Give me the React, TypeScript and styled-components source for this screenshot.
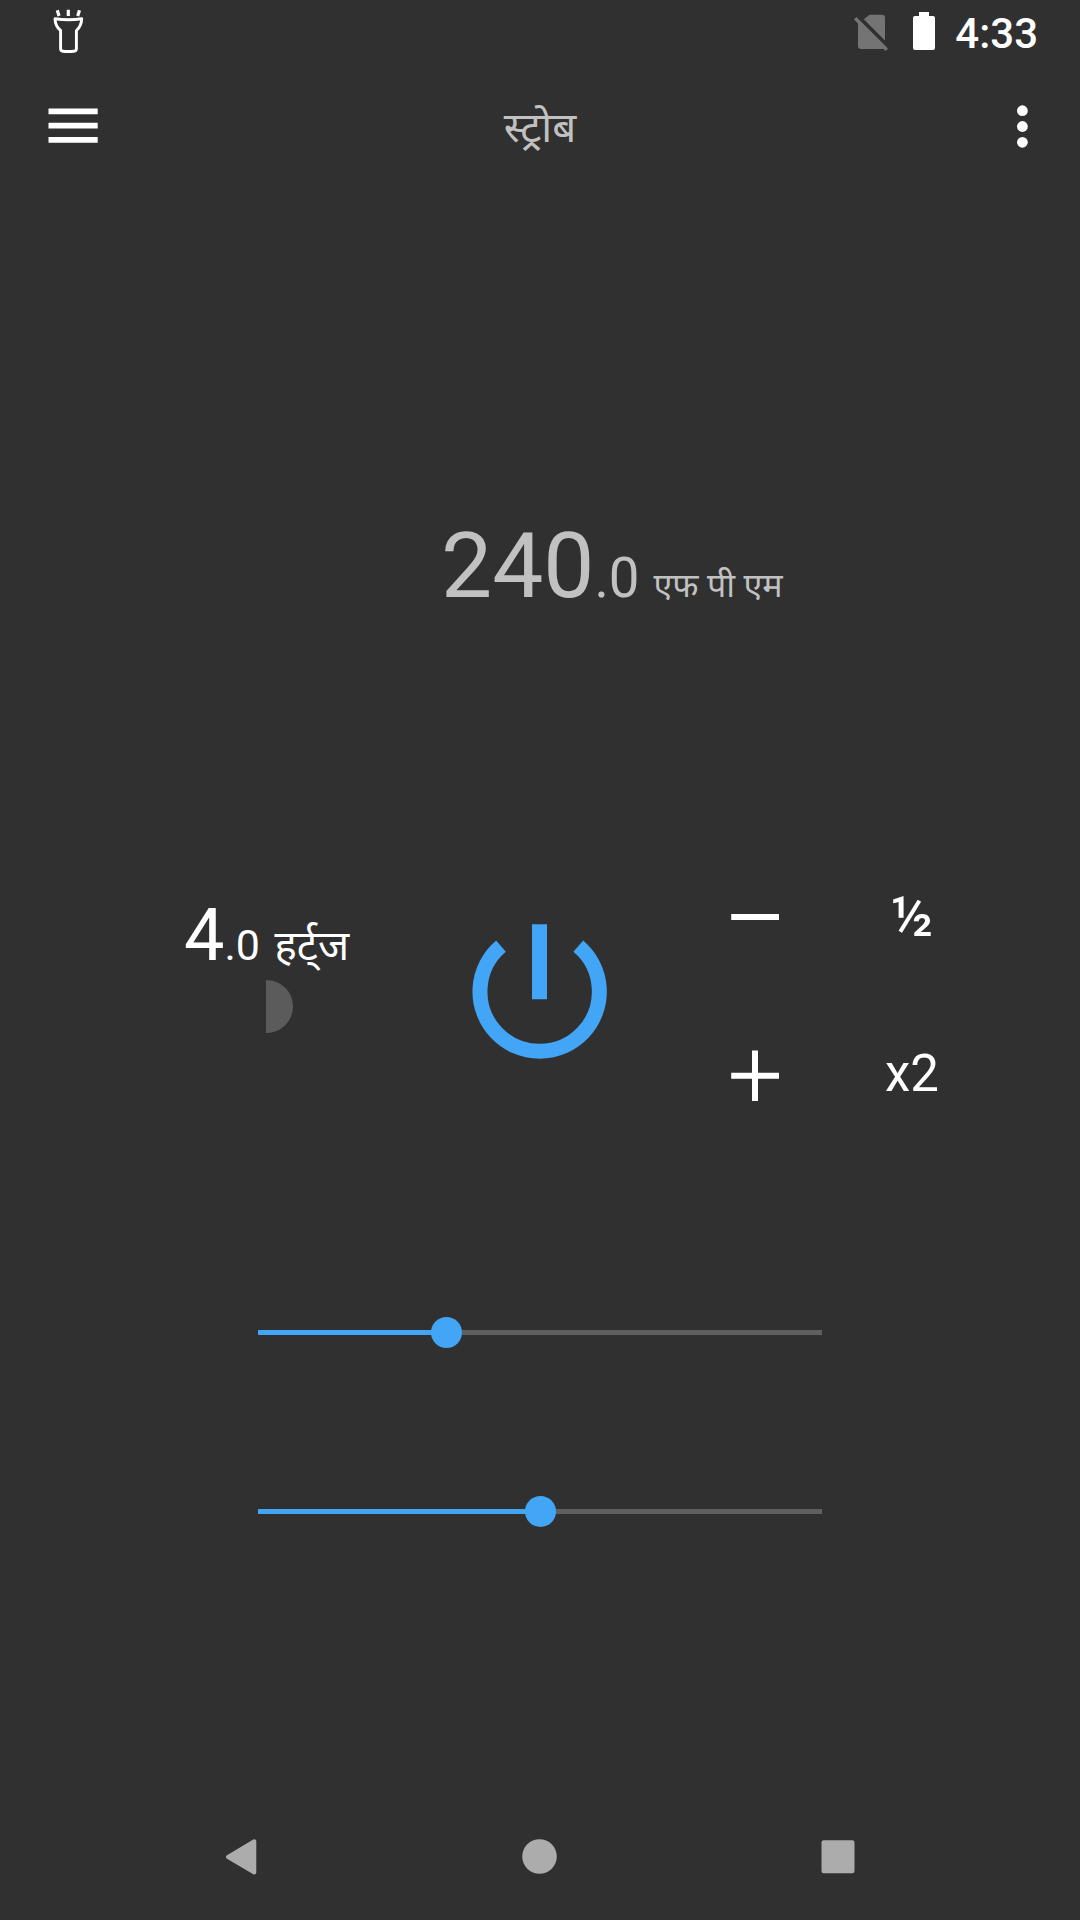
import React from "react";
import styled, { createGlobalStyle } from "styled-components";

const GlobalStyle = createGlobalStyle`
  * { box-sizing: border-box; }
  body { margin: 0; background: #303030; }
`;

const Screen = styled.div`
  width: 1080px;
  height: 1920px;
  display: flex;
  flex-direction: column;
  overflow: hidden;
  background: #303030;
  color: #fff;
  font-family: Roboto, "Noto Sans", "Noto Sans Devanagari", sans-serif;
`;

const StatusBar = styled.div`
  height: 63px;
  flex: none;
  display: flex;
  justify-content: space-between;
  padding: 0 42px 0 50px;
`;

const StatusGroup = styled.div`
  display: flex;
  height: 63px;
`;

const Clock = styled.span`
  margin-left: 19px;
  font-size: 42px;
  font-weight: 500;
  line-height: 68px;
`;

const AppBar = styled.header`
  height: 127px;
  flex: none;
  display: grid;
  grid-template-columns: 144px 1fr 144px;
  align-items: start;
`;

const IconButton = styled.button<{ $end?: boolean }>`
  height: 127px;
  border: 0;
  padding: 0;
  background: none;
  color: #fff;
  display: flex;
  justify-content: ${(p) => (p.$end ? "flex-end" : "flex-start")};
`;

const Title = styled.h1`
  margin: 0;
  padding-top: 36px;
  text-align: center;
  font-size: 42px;
  font-weight: 400;
  line-height: 57px;
  color: #c1c1c1;
`;

const Main = styled.main`
  flex: 1;
  display: flex;
  flex-direction: column;
`;

const Readout = styled.div<{ $color: string }>`
  display: flex;
  align-items: baseline;
  white-space: pre;
  color: ${(p) => p.$color};
`;

const Part = styled.span<{ $size: number; $gap?: number }>`
  font-size: ${(p) => p.$size}px;
  line-height: 100px;
  margin-left: ${(p) => p.$gap ?? 0}px;
`;

const FpmPanel = styled.section`
  height: 690px;
  padding: 326px 0 0 441px;
`;

const Controls = styled.section`
  height: 260px;
  display: grid;
  grid-template-columns: 462px 156px 60px 154px 160px;
`;

const HzPanel = styled.div`
  padding: 6px 0 0 184px;
`;

const HalfDisc = styled.div`
  width: 27px;
  height: 53px;
  margin: -16px 0 0 82px;
  border-radius: 0 27px 27px 0;
  background: #5b5b5b;
`;

const PowerButton = styled(IconButton)`
  height: 160px;
  margin-top: 30px;
`;

const ButtonColumn = styled.div`
  display: flex;
  flex-direction: column;
`;

const StepButton = styled.button<{ $weight?: number; $size?: number; $line?: number }>`
  height: 158px;
  border: 0;
  padding: 0;
  background: none;
  color: #fff;
  display: flex;
  align-items: flex-start;
  justify-content: center;
  font-family: Roboto, sans-serif;
  font-size: ${(p) => p.$size ?? 51}px;
  font-weight: ${(p) => p.$weight ?? 400};
  line-height: ${(p) => p.$line ?? 72}px;
`;

const Sliders = styled.section`
  display: flex;
  flex-direction: column;
  gap: 147px;
  padding: 176px 258px 0;
`;

const Slider = styled.div`
  height: 32px;
  display: flex;
  align-items: center;
`;

const Track = styled.div<{ $filled?: boolean; $width?: number }>`
  height: 5px;
  flex: ${(p) => (p.$width ? `0 0 ${p.$width}px` : "1")};
  background: ${(p) => (p.$filled ? "#42a5f5" : "#5f5f5f")};
`;

const Thumb = styled.div`
  width: 31px;
  height: 31px;
  flex: none;
  margin: 0 -15.5px;
  border-radius: 50%;
  background: #42a5f5;
  z-index: 1;
`;

const NavBar = styled.nav`
  height: 126px;
  flex: none;
  display: grid;
  grid-template-columns: 91px 300px 297px 300px 92px;
  align-items: center;
`;

const NavButton = styled.button<{ $column: number }>`
  grid-row: 1;
  grid-column: ${(p) => p.$column};
  height: 60px;
  border: 0;
  padding: 0;
  background: none;
  display: flex;
  justify-content: center;
  align-items: center;
`;

function SliderRow({ value }: { value: number }) {
  return (
    <Slider>
      <Track $filled $width={value} />
      <Thumb />
      <Track />
    </Slider>
  );
}

export default function App() {
  return (
    <Screen>
      <GlobalStyle />
      <StatusBar>
        <StatusGroup>
          <svg width="40" height="63" viewBox="50 0 40 63" fill="none" stroke="#fff" strokeLinejoin="round">
            <path d="M57.3 10.3L59 16M68.3 9.8V16M79.5 10.3L77.7 16" strokeWidth="3.2" />
            <path d="M55 18.8Q68.3 20.7 81.7 18.8Q81.2 26.5 76.4 30.5V48.5Q76.4 51 74 51.2Q68 51.8 63 51.2Q60.6 51 60.6 48.5V30.5Q55.4 26.5 55 18.8Z" strokeWidth="2.9" />
          </svg>
        </StatusGroup>
        <StatusGroup>
          <svg width="84" height="63" viewBox="852 0 84 63">
            <path d="M869.5 14.7H882Q885 14.7 885 17.7V40.5L863.8 19.3ZM858 21.5L884.7 48.2Q884 49 882 49H861Q858 49 858 46Z" fill="#747474" />
            <path d="M855.2 18.2L886.8 49.8" stroke="#747474" strokeWidth="3.4" />
            <path d="M919 12H929V16H933Q935 16 935 18V48Q935 50 933 50H915Q913 50 913 48V18Q913 16 915 16H919Z" fill="#fff" />
          </svg>
          <Clock>4:33</Clock>
        </StatusGroup>
      </StatusBar>
      <AppBar>
        <IconButton aria-label="menu">
          <svg width="144" height="127" viewBox="0 63 144 127" fill="#fff">
            <path d="M48.5 108.5H97.7V114.3H48.5ZM48.5 122.8H97.7V128.6H48.5ZM48.5 137H97.7V142.8H48.5Z" />
          </svg>
        </IconButton>
        <Title>स्ट्रोब</Title>
        <IconButton $end aria-label="more">
          <svg width="144" height="127" viewBox="936 63 144 127" fill="#fff">
            <circle cx="1022.4" cy="110.7" r="5.4" />
            <circle cx="1022.4" cy="126.5" r="5.4" />
            <circle cx="1022.4" cy="142.3" r="5.4" />
          </svg>
        </IconButton>
      </AppBar>
      <Main>
        <FpmPanel>
          <Readout $color="#c1c1c1">
            <Part $size={91}>240</Part>
            <Part $size={54.6}>.0</Part>
            <Part $size={34} $gap={14}>एफ पी एम</Part>
          </Readout>
        </FpmPanel>
        <Controls>
          <HzPanel>
            <Readout $color="#fff">
              <Part $size={72}>4</Part>
              <Part $size={43}>.0</Part>
              <Part $size={42} $gap={14.5}>हर्ट्ज</Part>
            </Readout>
            <HalfDisc />
          </HzPanel>
          <PowerButton aria-label="power">
            <svg width="156" height="160" viewBox="462 910 156 160" fill="none" stroke="#42a5f5" strokeWidth="15">
              <path d="M501 946.1A59.7 59.7 0 1 0 578.3 946.1" />
              <path d="M539.5 924.2V999.2" />
            </svg>
          </PowerButton>
          <div />
          <ButtonColumn>
            <StepButton aria-label="decrease">
              <svg width="154" height="158" viewBox="678 880 154 158" fill="#fff">
                <path d="M731.2 914H779V920H731.2Z" />
              </svg>
            </StepButton>
            <StepButton aria-label="increase">
              <svg width="154" height="102" viewBox="678 1038 154 102" fill="#fff">
                <path d="M731.2 1072.7H752V1050.5H758V1072.7H779V1078.7H758V1101H752V1078.7H731.2Z" />
              </svg>
            </StepButton>
          </ButtonColumn>
          <ButtonColumn>
            <StepButton $weight={500} $size={55} $line={74}>½</StepButton>
            <StepButton>x2</StepButton>
          </ButtonColumn>
        </Controls>
        <Sliders>
          <SliderRow value={188.3} />
          <SliderRow value={282.3} />
        </Sliders>
      </Main>
      <NavBar>
        <NavButton aria-label="back" $column={2}>
          <svg width="40" height="40" viewBox="221 1837 40 40" fill="#acacac" stroke="#acacac" strokeWidth="4" strokeLinejoin="round">
            <path d="M228 1857L254.3 1841.3V1872.5Z" />
          </svg>
        </NavButton>
        <NavButton aria-label="home" $column={3}>
          <svg width="40" height="40" viewBox="519.5 1837 40 40">
            <circle cx="539" cy="1856.5" r="17.3" fill="#acacac" />
          </svg>
        </NavButton>
        <NavButton aria-label="recents" $column={4}>
          <svg width="40" height="40" viewBox="818 1837 40 40">
            <rect x="821.5" y="1840.2" width="33" height="33" rx="2.2" fill="#acacac" />
          </svg>
        </NavButton>
      </NavBar>
    </Screen>
  );
}
